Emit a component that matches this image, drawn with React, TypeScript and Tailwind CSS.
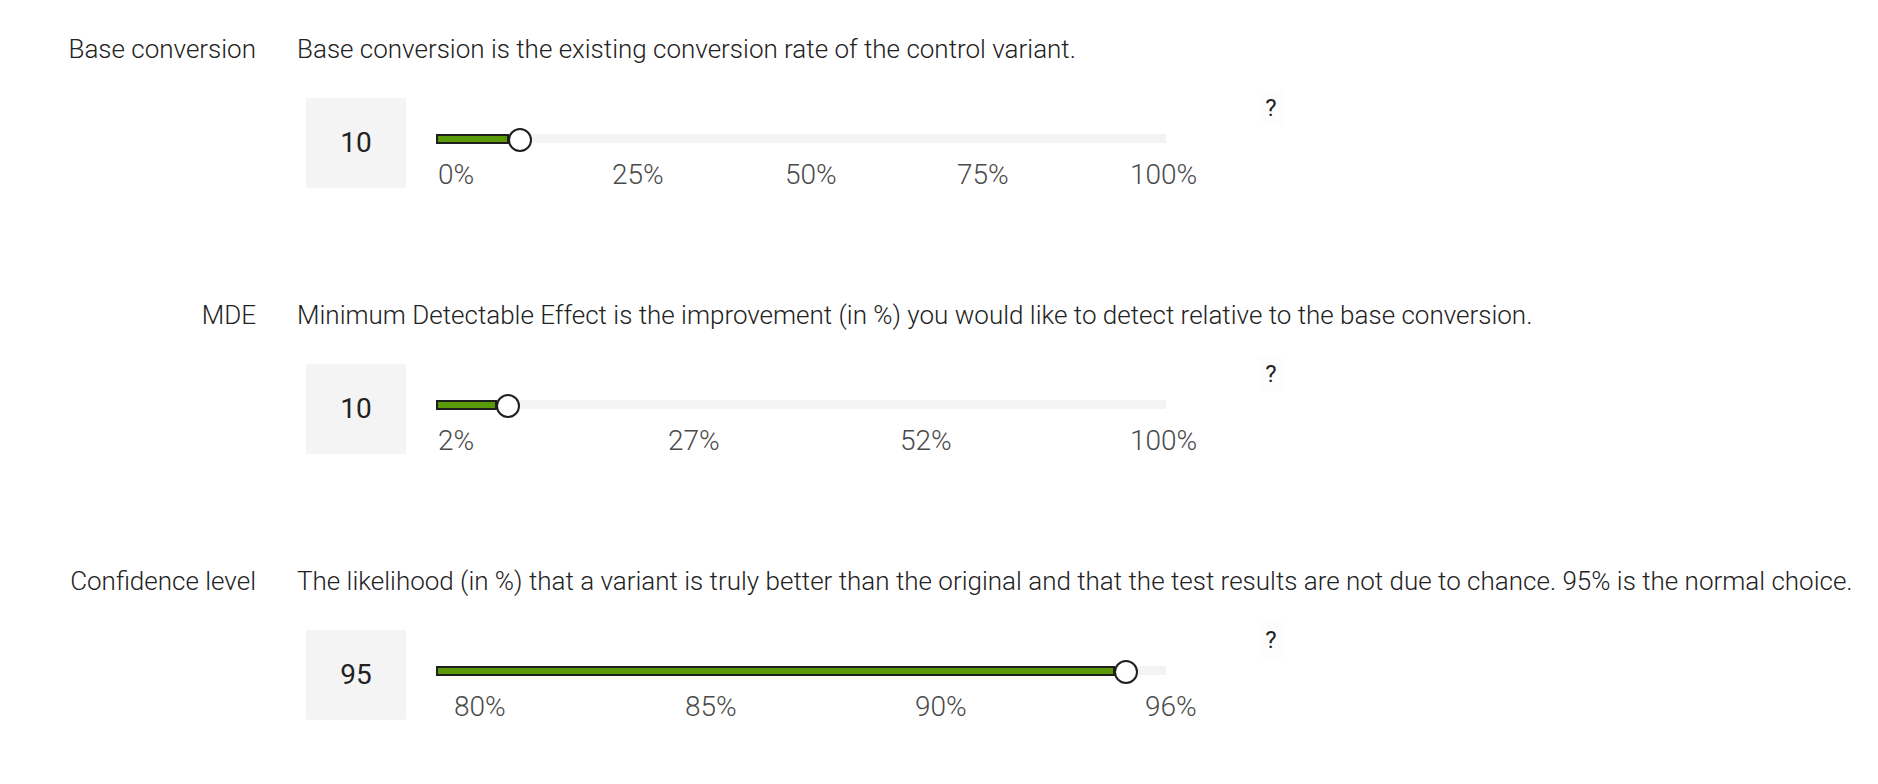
interface Param {
  label: string;
  description: string;
  value: number;
  // thumb position along the usable part of the track (0..1)
  pos: number;
  ticks: string[];
  tickCols: string;
}

const params: Param[] = [
  {
    label: 'Base conversion',
    description: 'Base conversion is the existing conversion rate of the control variant.',
    value: 10,
    pos: 0.102,
    ticks: ['0%', '25%', '50%', '75%', '100%'],
    tickCols: 'grid grid-cols-[174px_173px_172px_173px_auto] pl-[2px]',
  },
  {
    label: 'MDE',
    description:
      'Minimum Detectable Effect is the improvement (in %) you would like to detect relative to the base conversion.',
    value: 10,
    pos: 0.085,
    ticks: ['2%', '27%', '52%', '100%'],
    tickCols: 'grid grid-cols-[230px_232px_230px_auto] pl-[2px]',
  },
  {
    label: 'Confidence level',
    description:
      'The likelihood (in %) that a variant is truly better than the original and that the test results are not due to chance. 95% is the normal choice.',
    value: 95,
    pos: 0.96,
    ticks: ['80%', '85%', '90%', '96%'],
    tickCols: 'grid grid-cols-[231px_230px_230px_auto] pl-[18px]',
  },
];

const TRACK_W = 730;
const THUMB = 24;

function Slider({ p }: { p: Param }) {
  const center = THUMB / 2 + p.pos * (TRACK_W - THUMB);
  return (
    <div className="w-[730px] pt-[36px]">
      <div className="relative h-[9px] bg-[#f3f3f3]">
        <div
          className="absolute left-0 top-0 h-[10px] border-2 border-[#1f1f1f] bg-[#5a9a06]"
          style={{ width: center - 11 }}
        />
        <div
          className="absolute top-[-6px] h-[24px] w-[24px] rounded-full border-2 border-[#1f1f1f] bg-white"
          style={{ left: center - THUMB / 2 }}
        />
      </div>
      <div className={`${p.tickCols} mt-[16px] text-[28px] leading-[32px] font-light text-[#4a4a4a]`}>
        {p.ticks.map((t) => (
          <span key={t} className="whitespace-nowrap">
            {t}
          </span>
        ))}
      </div>
    </div>
  );
}

export default function App() {
  return (
    <div className="w-full bg-white pt-[33px] font-['Roboto','Liberation_Sans',sans-serif] text-[#222]">
      {params.map((p) => (
        <section key={p.label} className="h-[266px] last:h-auto">
          <div className="flex items-start text-[26px] leading-[32px] font-light">
            <div className="w-[256px] shrink-0 text-right whitespace-nowrap">{p.label}</div>
            <div className="ml-[41px] whitespace-nowrap">{p.description}</div>
          </div>

          <div className="mt-[25px] flex items-start pl-[306px]">
            <div className="mt-[8px] flex h-[90px] w-[100px] shrink-0 items-center justify-center rounded-[2px] bg-[#f4f4f4] text-[28px] text-[#222]">
              {p.value}
            </div>
            <div className="ml-[30px] mt-[8px]">
              <Slider p={p} />
            </div>
            <button
              className="ml-[92px] h-[36px] w-[26px] bg-[#fdfdfd] text-[24px] leading-[28px] text-[#222]"
              title="Help"
            >
              ?
            </button>
          </div>
        </section>
      ))}
    </div>
  );
}
